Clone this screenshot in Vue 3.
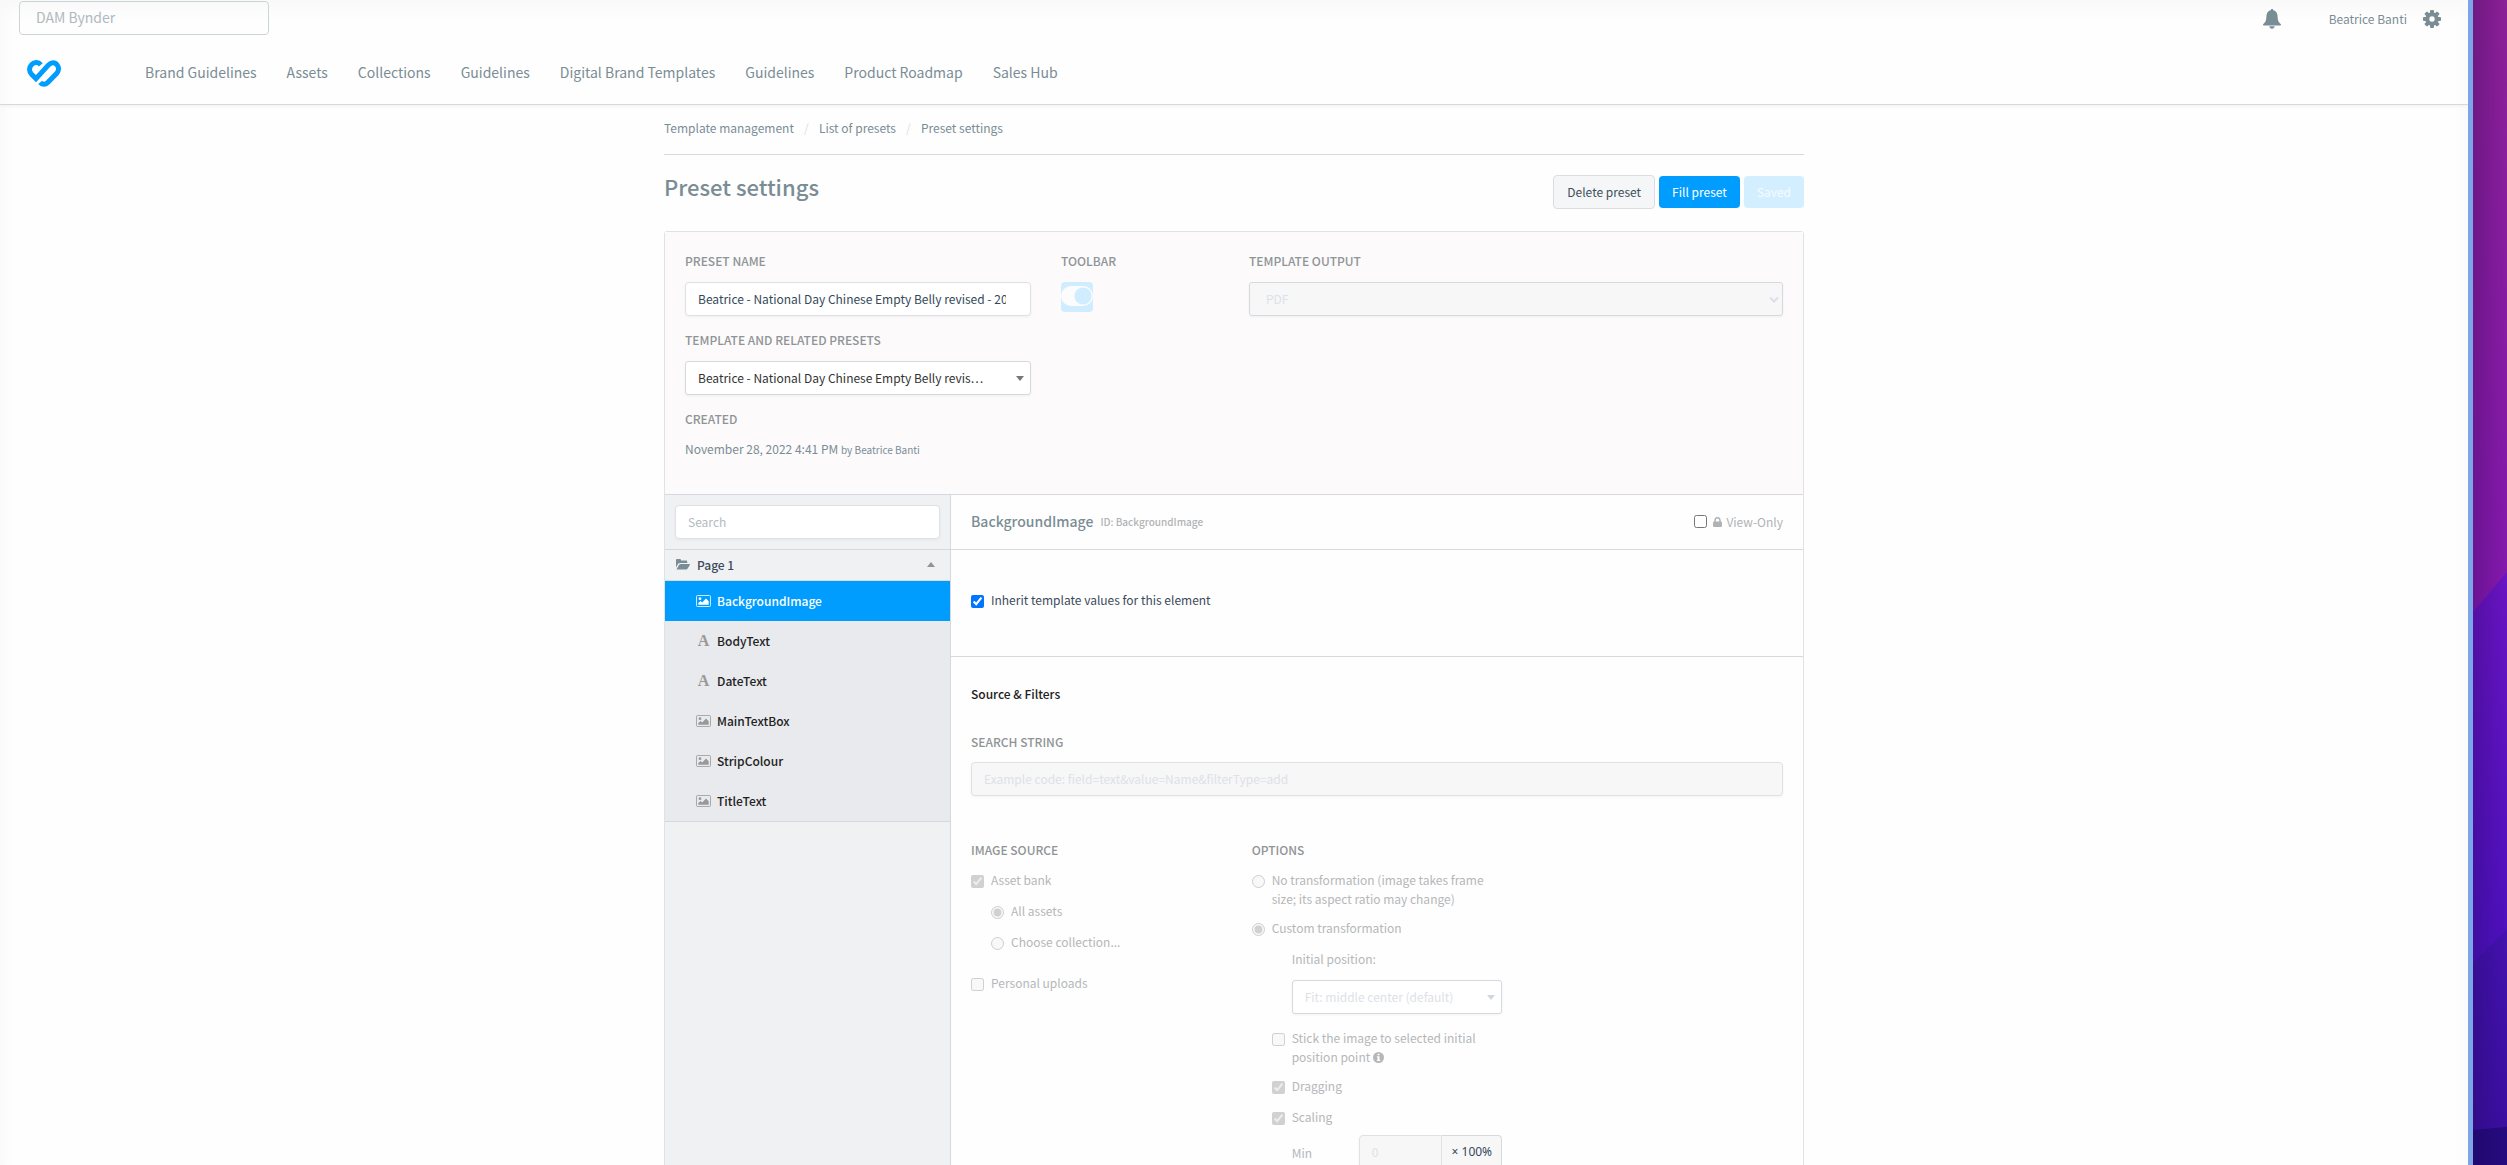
<script setup>
import { ref } from 'vue'

const navLinks = [
  'Brand Guidelines', 'Assets', 'Collections', 'Guidelines',
  'Digital Brand Templates', 'Guidelines', 'Product Roadmap', 'Sales Hub',
]

const elements = [
  { name: 'BackgroundImage', type: 'image' },
  { name: 'BodyText', type: 'text' },
  { name: 'DateText', type: 'text' },
  { name: 'MainTextBox', type: 'image' },
  { name: 'StripColour', type: 'image' },
  { name: 'TitleText', type: 'image' },
]

const selected = ref('BackgroundImage')
const presetName = ref('Beatrice - National Day Chinese Empty Belly revised - 2022')
const inherit = ref(true)
const viewOnly = ref(false)
</script>

<template>
  <div class="desktop">
    <div class="window">
      <header class="topbar">
        <div class="utility">
          <input class="portal-search" type="text" placeholder="DAM Bynder" aria-label="Search portal">
          <div class="account">
            <button class="icon-button bell" type="button" aria-label="Notifications">
              <svg width="18" height="20" viewBox="0 0 18 20" fill="currentColor">
                <path d="M9 0c.8 0 1.300.5 1.300 1.300C13.300 2 14.500 4.600 14.600 7.500c.1 4 .9 5.900 3.300 7.800.2.700 0 1.200-.6 1.200H.7c-.6 0-.8-.5-.6-1.200 2.400-1.900 3.200-3.800 3.300-7.800C3.500 4.600 4.700 2 7.700 1.300 7.700.5 8.200 0 9 0z" />
                <path d="M6.300 17.300h5.400c-.2 1.500-1.300 2.500-2.700 2.500s-2.500-1-2.700-2.500z" />
              </svg>
            </button>
            <a class="user" href="#">Beatrice Banti</a>
            <button class="icon-button" type="button" aria-label="Settings">
              <svg width="18" height="18" viewBox="0 0 18 18">
                <g fill="currentColor">
                  <rect v-for="angle in [0, 45, 90, 135]" :key="angle" x="7" y="0" width="4" height="18" rx="1" :transform="`rotate(${angle} 9 9)`" />
                </g>
                <circle cx="9" cy="9" r="4.700" fill="none" stroke="currentColor" stroke-width="4" />
                <circle cx="9" cy="9" r="2.700" fill="#fefefe" />
              </svg>
            </button>
          </div>
        </div>
        <div class="main-nav">
          <a class="logo" href="#" aria-label="Home">
            <svg width="34" height="27" viewBox="0 0 34 27" fill="none" stroke="#009dff" stroke-width="5">
              <path d="M13.800 4.800C11.500 2 7.500 1.700 4.700 4.600 1.900 7.500 1.900 11.300 4.500 14.200L9 18.600 21.300 5.200C24 2 28 2 30 4.800 32.200 7.400 31.800 10.700 30 13L20.500 22.800C18.300 25 15.200 24.900 13.200 22.400" />
              <path d="M10.600 22.600L14.800 18" stroke="#fefefe" stroke-width="1.500" />
            </svg>
          </a>
          <nav class="nav-links">
            <a v-for="(link, i) in navLinks" :key="i" href="#">{{ link }}</a>
          </nav>
        </div>
      </header>

      <main class="content">
        <nav class="breadcrumb" aria-label="Breadcrumb">
          <a href="#">Template management</a><span>/</span>
          <a href="#">List of presets</a><span>/</span>
          <a href="#">Preset settings</a>
        </nav>

        <div class="title-row">
          <h1>Preset settings</h1>
          <div class="actions">
            <button class="btn btn-default" type="button">Delete preset</button>
            <button class="btn btn-primary" type="button">Fill preset</button>
            <button class="btn btn-primary" type="button" disabled>Saved</button>
          </div>
        </div>

        <div class="panel">
          <section class="summary">
            <div class="col-4">
              <label class="caption" for="preset-name">PRESET NAME</label>
              <input id="preset-name" v-model="presetName" class="field preset-name" type="text">
              <label class="caption" for="related">TEMPLATE AND RELATED PRESETS</label>
              <div class="select">
                <select id="related" class="field">
                  <option>Beatrice - National Day Chinese Empty Belly revis…</option>
                </select>
                <i class="caret"></i>
              </div>
              <h2 class="caption">CREATED</h2>
              <p class="created">November 28, 2022 4:41 PM <small>by Beatrice Banti</small></p>
            </div>
            <div class="col-2">
              <label class="caption" for="toolbar">TOOLBAR</label>
              <input id="toolbar" class="toggle" type="checkbox" checked disabled>
            </div>
            <div class="col-6">
              <label class="caption" for="output">TEMPLATE OUTPUT</label>
              <div class="select">
                <select id="output" class="field output" disabled>
                  <option>PDF</option>
                </select>
                <svg class="chevron" width="10" height="8" viewBox="0 0 10 8" fill="none" stroke="currentColor" stroke-width="2">
                  <path d="M1 1.500l4 4 4-4" />
                </svg>
              </div>
            </div>
          </section>

          <div class="editor">
            <aside class="sidebar">
              <div class="sidebar-search">
                <input class="field" type="text" placeholder="Search" aria-label="Search elements">
              </div>
              <button class="page-row" type="button">
                <svg width="14" height="11" viewBox="0 0 14 11" fill="currentColor">
                  <path d="M0 8.500V1.200C0 .5.500 0 1.200 0h2.600C4.500 0 5 .5 5 1.200v.3h5c.7 0 1.200.5 1.200 1.200V4H4.100C3.200 4 2.500 4.400 2 5L0 8.500z" />
                  <path d="M.6 10.300L3 6c.3-.5.800-.9 1.500-.9h8.900c.5 0 .7.400.4.900l-2.300 3.800c-.3.500-.8.800-1.400.8H1c-.400 0-.5-.1-.4-.3z" />
                </svg>
                <span>Page 1</span>
                <i class="caret up"></i>
              </button>
              <ul class="elements">
                <li v-for="el in elements" :key="el.name">
                  <button type="button" :class="{ active: el.name === selected }" @click="selected = el.name">
                    <svg v-if="el.type === 'image'" width="15" height="12" viewBox="0 0 15 12">
                      <rect x=".5" y=".5" width="14" height="11" rx="1" fill="none" stroke="currentColor" opacity=".8" />
                      <circle cx="4" cy="3.700" r="1.400" fill="currentColor" />
                      <path d="M2.300 9.800V8L4.600 5.900l1.600 1.500L10 3.500l2.700 2.800v3.500z" fill="currentColor" />
                    </svg>
                    <i v-else class="glyph" aria-hidden="true">A</i>
                    {{ el.name }}
                  </button>
                </li>
              </ul>
            </aside>

            <div class="details">
              <div class="details-head">
                <h2>BackgroundImage</h2>
                <small>ID: BackgroundImage</small>
                <label class="view-only">
                  <input v-model="viewOnly" type="checkbox">
                  <svg width="9" height="10" viewBox="0 0 9 10">
                    <rect y="4.500" width="9" height="5.500" rx="1" fill="currentColor" />
                    <path d="M2 5V3.200a2.500 2.500 0 0 1 5 0V5" fill="none" stroke="currentColor" stroke-width="1.500" />
                  </svg>
                  View-Only
                </label>
              </div>

              <div class="inherit">
                <label class="option"><input v-model="inherit" type="checkbox"><span>Inherit template values for this element</span></label>
              </div>

              <div class="filters">
                <h3>Source &amp; Filters</h3>
                <label class="caption" for="search-string">SEARCH STRING</label>
                <input id="search-string" class="field" type="text" disabled placeholder="Example code: field=text&amp;value=Name&amp;filterType=add">

                <div class="filter-columns">
                  <div class="source">
                    <h4 class="caption">IMAGE SOURCE</h4>
                    <label class="option"><input type="checkbox" checked disabled><span>Asset bank</span></label>
                    <div class="nested">
                      <label class="option"><input type="radio" name="assets" checked disabled><span>All assets</span></label>
                      <label class="option"><input type="radio" name="assets" disabled><span>Choose collection...</span></label>
                    </div>
                    <label class="option"><input type="checkbox" disabled><span>Personal uploads</span></label>
                  </div>

                  <div class="options">
                    <h4 class="caption">OPTIONS</h4>
                    <label class="option"><input type="radio" name="transform" disabled><span>No transformation (image takes frame size; its aspect ratio may change)</span></label>
                    <label class="option"><input type="radio" name="transform" checked disabled><span>Custom transformation</span></label>
                    <div class="nested">
                      <div class="position">
                        <label for="position">Initial position:</label>
                        <div class="select">
                          <select id="position" class="field" disabled>
                            <option>Fit: middle center (default)</option>
                          </select>
                          <i class="caret"></i>
                        </div>
                      </div>
                      <label class="option"><input type="checkbox" disabled><span>Stick the image to selected initial position point
                        <svg class="info" width="11" height="11" viewBox="0 0 11 11">
                          <circle cx="5.500" cy="5.500" r="5.500" fill="currentColor" />
                          <path d="M4.600 1.700h1.900v1.500H4.600zM3.900 4.200h2.600v3.600h.7V9H3.900V7.800h.7V5.400h-.7z" fill="#fefefe" />
                        </svg></span></label>
                      <label class="option"><input type="checkbox" checked disabled><span>Dragging</span></label>
                      <label class="option"><input type="checkbox" checked disabled><span>Scaling</span></label>
                      <div class="scale">
                        <label for="scale-min">Min</label>
                        <input id="scale-min" class="field" type="text" value="0" disabled>
                        <span class="addon">× 100%</span>
                      </div>
                    </div>
                  </div>
                </div>
              </div>
            </div>
          </div>
        </div>
      </main>
    </div>

    <div class="window-edge"></div>
    <svg class="wallpaper" viewBox="0 0 34 1165" preserveAspectRatio="none" aria-hidden="true">
      <defs>
        <linearGradient id="magenta" x2="0" y2="1">
          <stop offset="0" stop-color="#8c2098" />
          <stop offset="1" stop-color="#8418b0" />
        </linearGradient>
        <linearGradient id="violet" x2="0" y2="1">
          <stop offset="0" stop-color="#6a14c4" />
          <stop offset="1" stop-color="#4c10c0" />
        </linearGradient>
        <linearGradient id="indigo" x2="0" y2="1">
          <stop offset="0" stop-color="#4412b0" />
          <stop offset="1" stop-color="#3a0ea0" />
        </linearGradient>
        <linearGradient id="shade">
          <stop offset="0" stop-color="#100030" stop-opacity=".22" />
          <stop offset="1" stop-color="#100030" stop-opacity="0" />
        </linearGradient>
      </defs>
      <path d="M0 0H34V612H0z" fill="url(#magenta)" />
      <path d="M0 612L34 572V970H0z" fill="url(#violet)" />
      <path d="M0 963L34 929V1165H0z" fill="url(#indigo)" />
      <path d="M0 1130L34 1127V1165H0z" fill="#260a80" />
      <path d="M0 0H34V1165H0z" fill="url(#shade)" />
    </svg>
  </div>
</template>

<style>
body {
  margin: 0;
}
</style>

<style scoped>
* {
  box-sizing: border-box;
}

.desktop {
  display: flex;
  height: 100vh;
  overflow: hidden;
  background: #fefefe;
  font-family: "Noto Sans CJK SC", "Noto Sans", sans-serif;
  font-size: 12px;
  line-height: 19px;
  color: #7a8d95;
}

.window {
  flex: 1;
  min-width: 0;
  height: 100%;
  overflow: hidden;
  background:
    linear-gradient(to bottom, #f9f9f9, transparent 20px),
    linear-gradient(to right, #fafafa, transparent 14px),
    linear-gradient(to left, #fafafa, transparent 14px),
    #fefefe;
}

.window-edge {
  width: 5px;
  background: #7ba5e6;
}

.wallpaper {
  width: 34px;
  height: 100%;
}

a {
  color: inherit;
  text-decoration: none;
}

h1, h2, h3, h4, p, ul {
  margin: 0;
  padding: 0;
}

button, input, select {
  font: inherit;
}

input[type="checkbox"],
input[type="radio"] {
  flex: none;
  width: 13px;
  height: 13px;
  margin: 0;
}

/* Header */
.topbar {
  height: 105px;
  border-bottom: 1px solid #d5d9da;
  box-shadow: 0 1px 4px rgba(0, 0, 0, .06);
}

.utility {
  display: flex;
  justify-content: space-between;
  align-items: flex-start;
  height: 44px;
  padding: 1px 27px 0 19px;
}

.portal-search {
  width: 250px;
  height: 34px;
  padding: 0 16px 2px;
  border: 1px solid #ccd5d5;
  border-radius: 4px;
  background: transparent;
  font-size: 14px;
}

.portal-search::placeholder {
  color: #b0b9bd;
}

.account {
  display: flex;
  align-items: center;
  gap: 16px;
  height: 36px;
}

.user {
  padding-bottom: 2px;
}

.icon-button {
  display: flex;
  padding: 0;
  border: 0;
  background: none;
  color: #7a8d95;
}

.bell {
  margin-right: 32px;
}

.main-nav {
  display: flex;
  align-items: center;
  height: 58px;
  padding-left: 27px;
}

.logo {
  display: flex;
  width: 118px;
}

.nav-links {
  display: flex;
  gap: 30px;
  padding-bottom: 2px;
  font-size: 14px;
}

/* Page heading */
.content {
  width: 1140px;
  max-width: 100%;
  margin: 0 auto;
}

.breadcrumb {
  display: flex;
  height: 50px;
  padding-top: 13px;
  border-bottom: 1px solid #d5d9df;
}

.breadcrumb span {
  width: 25px;
  text-align: center;
  color: #dde0e2;
}

.title-row {
  display: flex;
  justify-content: space-between;
  align-items: flex-start;
  height: 76px;
  padding-top: 20px;
}

h1 {
  font-size: 22px;
  line-height: 22px;
  font-weight: 500;
}

.actions {
  display: flex;
  align-items: center;
  gap: 4px;
}

.btn {
  height: 32px;
  padding: 0 13px 2px;
  border: 0;
  border-radius: 4px;
}

.btn-default {
  height: 34px;
  border: 1px solid #dadde1;
  background: #f5f6f8;
  color: #3d505a;
}

.btn-primary {
  background: #009dff;
  color: #fff;
}

.btn-primary:disabled {
  background: #d3efff;
  color: #f5fcff;
}

/* Panel */
.panel {
  border: 1px solid #e0e2e6;
  border-radius: 3px 3px 0 0;
}

.summary {
  display: grid;
  grid-template-columns: repeat(12, 1fr);
  column-gap: 30px;
  padding: 19px 20px 35px;
  border-bottom: 1px solid #d5d9df;
  background: #fcfafb;
}

.col-2 { grid-column: span 2; }
.col-4 { grid-column: span 4; }
.col-6 { grid-column: span 6; }

.caption {
  display: block;
  font-size: 12px;
  line-height: 19px;
  font-weight: 500;
  color: #8f9496;
}

.summary .caption {
  margin-bottom: 12px;
}

.summary h2.caption {
  margin-bottom: 11px;
}

.summary .field {
  margin-bottom: 14px;
}

.field {
  display: block;
  width: 100%;
  height: 34px;
  padding: 0 12px 2px;
  border: 1px solid #dfe2e5;
  border-radius: 4px;
  outline: 0;
  background: #fff;
  box-shadow: 0 1px 3px rgba(0, 0, 0, .05);
  color: #34495a;
}

.field::placeholder {
  color: #b3bbc0;
}

select.field {
  appearance: none;
  border-color: #d5d9e0;
  border-radius: 3px;
  color: #333;
}

.field:disabled {
  background: #f7f7f7;
  color: #dde1e8;
  opacity: 1;
}

.field:disabled::placeholder {
  color: #dde1e8;
}

.preset-name {
  padding-right: 24px;
}

.field.output {
  padding-left: 16px;
}

.select {
  position: relative;
}

.caret {
  border: 4px solid transparent;
  border-top: 5px solid #777;
  border-bottom: 0;
}

.caret.up {
  border-top: 0;
  border-bottom: 5px solid #8f9496;
}

.select .caret {
  position: absolute;
  top: 15px;
  right: 7px;
}

.chevron {
  position: absolute;
  top: 14px;
  right: 4px;
  color: #dadfe8;
}

.created {
  height: 20px;
}

.created small {
  font-size: 10px;
}

.toggle[type="checkbox"] {
  appearance: none;
  display: flex;
  align-items: center;
  width: 32px;
  height: 30px;
  border-radius: 4px;
  background: #d0edff;
}

.toggle::before {
  content: "";
  width: 32px;
  height: 20px;
  box-sizing: border-box;
  margin-bottom: 2px;
  border-radius: 10px;
  background: radial-gradient(circle at 22px 10px, #d0edff 8px, #fcfcfd 9px);
}

/* Editor */
.editor {
  display: grid;
  grid-template-columns: 286px 1fr;
}

.sidebar {
  border-right: 1px solid #d5d9df;
  background: #f0f1f3;
}

.sidebar-search {
  height: 55px;
  padding: 10px;
  border-bottom: 1px solid #d5d9df;
}

.page-row {
  display: flex;
  align-items: center;
  gap: 7px;
  width: 100%;
  height: 31px;
  padding: 0 15px 1px 11px;
  border: 0;
  border-bottom: 1px solid #dadde0;
  background: #f0f1f2;
  color: #7a8d95;
}

.page-row span {
  flex: 1;
  text-align: left;
  font-weight: 500;
  color: #3d4a5c;
}

.elements {
  list-style: none;
  border-bottom: 1px solid #d5d9df;
  background: #e9eaed;
}

.elements button {
  display: flex;
  align-items: center;
  gap: 6px;
  width: 100%;
  height: 40px;
  padding: 0 31px 1px;
  border: 0;
  background: none;
  font-weight: 500;
  color: #222;
}

.elements svg,
.glyph {
  width: 15px;
  color: #999;
}

.glyph {
  font: 700 16px "Liberation Serif", serif;
  text-align: center;
}

.elements .active {
  background: #009dff;
  color: #fff;
}

.elements .active svg {
  color: #fff;
}

.details-head {
  display: flex;
  align-items: center;
  gap: 7px;
  height: 55px;
  padding: 0 20px 1px;
  border-bottom: 1px solid #d5d9df;
  color: #b0b3b5;
}

.details-head h2 {
  font-size: 14px;
  font-weight: 500;
  color: #7a8d95;
}

.details-head small {
  font-size: 10px;
  font-weight: 500;
}

.view-only {
  display: flex;
  align-items: center;
  gap: 4px;
  margin-left: auto;
}

.view-only input {
  margin-right: 2px;
}

.inherit {
  height: 107px;
  padding: 40px 20px 0;
  border-bottom: 1px solid #d5d9df;
  color: #3d4a5c;
}

.option {
  display: flex;
  align-items: flex-start;
  gap: 7px;
  min-height: 21px;
  margin-bottom: 10px;
}

.option:has(+ .scale) {
  margin-bottom: 7px;
}

.option input[type] {
  margin-top: 5px;
}

.filters {
  padding: 27px 20px;
}

h3 {
  margin-bottom: 29px;
  font-size: 12px;
  font-weight: 500;
  color: #222;
}

.filters .caption + .field {
  margin-top: 11px;
}

.filter-columns {
  display: grid;
  grid-template-columns: repeat(3, 1fr);
  column-gap: 30px;
  margin-top: 44px;
  color: #b5b7b9;
}

.filter-columns .caption {
  margin-bottom: 11px;
}

.nested {
  padding-left: 20px;
}

.source .nested {
  margin-bottom: 20px;
}

.position {
  padding-left: 20px;
  margin-bottom: 14px;
}

.position label {
  display: block;
  margin-bottom: 12px;
}

.position .field {
  background: #fff;
}

.position .caret {
  border-top-color: #d0d7e0;
}

.info {
  vertical-align: -1px;
}

.scale {
  display: flex;
  align-items: center;
  padding-left: 20px;
}

.scale label {
  width: 67px;
}

.scale .field {
  flex: 1;
  min-width: 0;
  border-radius: 4px 0 0 4px;
}

.scale .addon {
  width: 60px;
  height: 34px;
  border: 1px solid #d5d9e0;
  border-left: 0;
  border-radius: 0 4px 4px 0;
  background: #f7f7f8;
  font-family: "Noto Sans", sans-serif;
  line-height: 32px;
  text-align: center;
  color: #34495a;
}
</style>
